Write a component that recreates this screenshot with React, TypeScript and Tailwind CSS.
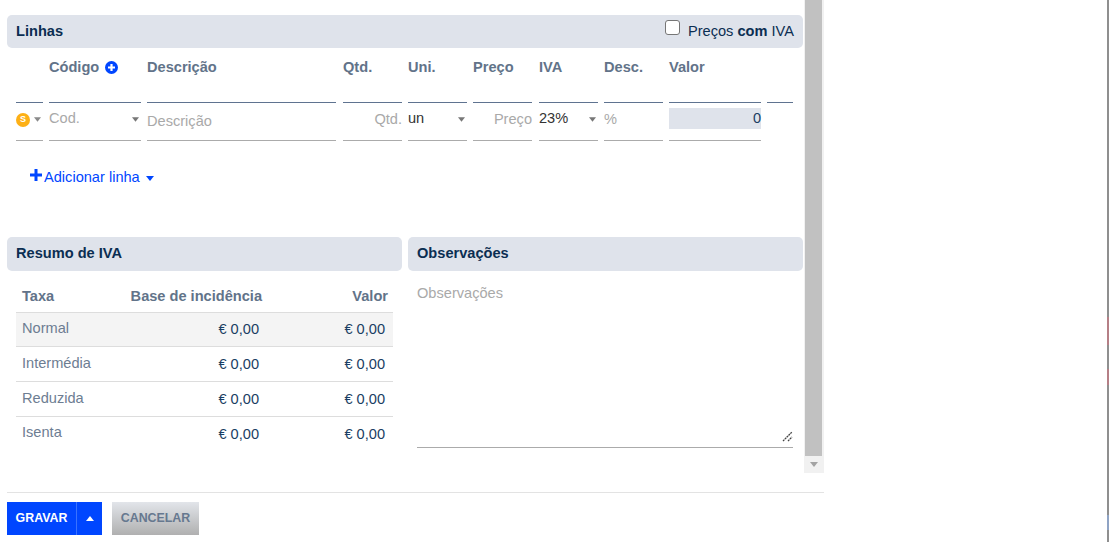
import React from "react";

const cols = "grid grid-cols-[27px_92px_190px_59px_59px_60px_59px_59px_92px_26px]";

function Tri({ up, className = "" }: { up?: boolean; className?: string }) {
  return (
    <svg width="8" height="5" viewBox="0 0 8 5" className={className}>
      <path d={up ? "M0 5 L4 0 L8 5 Z" : "M0 0 H8 L4 5 Z"} fill="currentColor" />
    </svg>
  );
}

function SectionHead({ children, className = "" }: { children: React.ReactNode; className?: string }) {
  return (
    <div className={`flex items-center justify-between bg-[#dfe3eb] rounded-[5px] pl-[9px] pr-[9px] font-bold text-[#0b2e52] ${className}`}>
      {children}
    </div>
  );
}

const vatRows = ["Normal", "Intermédia", "Reduzida", "Isenta"];

export default function App() {
  return (
    <div className="flex h-[542px] w-[1110px] overflow-hidden bg-white font-['Liberation_Sans',Arial,sans-serif] text-[14.6px]">
      <div className="w-[824px] flex flex-col shrink-0">
        <div className="flex h-[473px] shrink-0">
          <div className="w-[804px] shrink-0 pl-[7px] pr-px pt-[15px]">
            <SectionHead className="h-[33px]">
              <span>Linhas</span>
              <label className="flex items-center font-normal">
                <span className="w-[15px] h-[15px] rounded-[3px] border border-[#767676] bg-white mr-[8px] -translate-y-[4px]" />
                <span>Preços <b>com</b> IVA</span>
              </label>
            </SectionHead>

            <div className="pl-[9px] pt-[11px]">
              <div className={`${cols} gap-x-[6px] font-bold text-[#627389] leading-[16px] h-[44px]`}>
                <div className="border-b border-[#5f7390]" />
                <div className="border-b border-[#5f7390] flex items-start gap-[6px]">
                  <span>Código</span>
                  <span className="w-[13px] h-[13px] mt-[2px] rounded-full bg-[#0046ff] flex items-center justify-center">
                    <svg width="9" height="9" viewBox="0 0 9 9"><path d="M3.4 1h2.2v2.4H8v2.2H5.6V8H3.4V5.6H1V3.4h2.4z" fill="#fff" /></svg>
                  </span>
                </div>
                <div className="border-b border-[#5f7390] mr-px">Descrição</div>
                <div className="border-b border-[#5f7390]">Qtd.</div>
                <div className="border-b border-[#5f7390]">Uni.</div>
                <div className="border-b border-[#5f7390] mr-px">Preço</div>
                <div className="border-b border-[#5f7390]">IVA</div>
                <div className="border-b border-[#5f7390]">Desc.</div>
                <div className="border-b border-[#5f7390]">Valor</div>
                <div className="border-b border-[#5f7390]" />
              </div>

              <div className={`${cols} gap-x-[6px] h-[38px] text-[#a9a9a9]`}>
                <div className="border-b border-[#ababab] flex items-center gap-[4px] pb-[4px]">
                  <span className="w-[14px] h-[14px] rounded-full bg-[#fdb016] text-white text-[9px] font-bold flex items-center justify-center leading-none">S</span>
                  <Tri className="text-[#8a8a8a] w-[7px]" />
                </div>
                <div className="border-b border-[#ababab] flex justify-between items-center pb-[5px] pr-[2px]">
                  <span>Cod.</span>
                  <Tri className="text-[#777] w-[7px]" />
                </div>
                <div className="border-b border-[#ababab] flex items-center pt-[1px] mr-px">Descrição</div>
                <div className="border-b border-[#ababab] flex items-center justify-end pb-[3px]">Qtd.</div>
                <div className="border-b border-[#ababab] flex justify-between items-center pb-[5px] pr-[2px] text-[#333]">
                  <span>un</span>
                  <Tri className="text-[#777] w-[7px]" />
                </div>
                <div className="border-b border-[#ababab] flex items-center justify-end pb-[3px] mr-px">Preço</div>
                <div className="border-b border-[#ababab] flex justify-between items-center pb-[5px] pr-[2px] text-[#333]">
                  <span>23%</span>
                  <Tri className="text-[#777] w-[7px]" />
                </div>
                <div className="border-b border-[#ababab] flex items-center pb-[3px]">%</div>
                <div className="border-b border-[#ababab] pt-[5px]">
                  <div className="h-[21px] bg-[#dfe3eb] text-[#1a3e63] text-right leading-[21px]">0</div>
                </div>
                <div />
              </div>

              <div className="pl-[14px] pt-[26px] h-[96px] flex items-start text-[#0046ff]">
                <svg width="12" height="12" viewBox="0 0 12 12" className="mt-[2px] mr-[2px]"><path d="M4.5 0h3v4.5H12v3H7.5V12h-3V7.5H0v-3h4.5z" fill="currentColor" /></svg>
                <span>Adicionar linha</span>
                <Tri className="ml-[6px] mt-[9px]" />
              </div>
            </div>

            <div className="grid grid-cols-2 gap-x-[6px]">
              <div>
                <SectionHead className="h-[34px]">Resumo de IVA</SectionHead>
                <div className="px-[9px] pt-[9px]">
                  <div className="grid grid-cols-[1fr_136px_126px] h-[33px] font-bold text-[#627389] border-b border-[#dddddd] leading-[32px] pl-[6px] pr-[5px]">
                    <span>Taxa</span>
                    <span className="text-right">Base de incidência</span>
                    <span className="text-right">Valor</span>
                  </div>
                  {vatRows.map((r, i) => (
                    <div key={r} className={`grid grid-cols-[1fr_126px_126px] items-center pl-[6px] pr-[8px] ${i === 0 ? "h-[34px] bg-[#f4f4f4] border-b border-[#dddddd]" : i === 3 ? "h-[35px] pt-[1px]" : "h-[35px] pt-[1px] border-b border-[#dddddd]"}`}>
                      <span className={`text-[#6d7d92] ${i === 3 ? "-translate-y-[2px]" : "-translate-y-[1px]"}`}>{r}</span>
                      <span className="text-right text-[#1a3e63]">€ 0,00</span>
                      <span className="text-right text-[#1a3e63]">€ 0,00</span>
                    </div>
                  ))}
                </div>
              </div>
              <div>
                <SectionHead className="h-[34px]">Observações</SectionHead>
                <div className="pl-[9px] pr-[10px] pt-[13px]">
                  <div className="relative h-[164px] border-b border-[#ababab] text-[#a9a9a9] leading-[18px]">
                    Observações
                    <svg width="11" height="11" viewBox="0 0 11 11" className="absolute right-0 bottom-[5px]">
                      <path d="M1 10 L10 1 M6 10 L10 6" stroke="#444" strokeWidth="1.3" strokeDasharray="2 0.6" />
                    </svg>
                  </div>
                </div>
              </div>
            </div>
          </div>

          <div className="w-[20px] shrink-0 bg-[#f1f1f1] flex flex-col pl-px pr-[2px]">
            <div className="flex-1 bg-[#c1c1c1]" />
            <div className="h-[17px] flex items-center justify-center text-[#a3a3a3]">
              <Tri />
            </div>
          </div>
        </div>

        <div className="ml-[7px] mt-[19px] border-t border-[#e3e3e3] pt-[9px] flex gap-[10px]">
          <div className="flex h-[33px] w-[95px] bg-[#0046ff] text-white font-bold text-[12.4px] items-center">
            <span className="w-[69px] text-center">GRAVAR</span>
            <span className="h-full flex-1 border-l border-[#3a72ff] flex items-center justify-center">
              <Tri up />
            </span>
          </div>
          <div className="h-[33px] w-[87px] bg-gradient-to-b from-[#e2e5ea] to-[#b0b0b0] text-[#66788f] font-bold text-[12.4px] flex items-center justify-center">
            <span>CANCELAR</span>
          </div>
        </div>
      </div>

      <div className="flex-1 flex justify-end pr-px">
        <div className="w-[2px] h-full bg-[#8f8f8f] flex flex-col">
          <div className="h-[317px]" />
          <div className="h-[28px] bg-[#b57f86]" />
          <div className="h-[24px]" />
          <div className="h-[16px] bg-[#b57f86]" />
          <div className="h-[130px]" />
          <div className="h-[15px] bg-[#8fa3c4]" />
        </div>
      </div>
    </div>
  );
}
